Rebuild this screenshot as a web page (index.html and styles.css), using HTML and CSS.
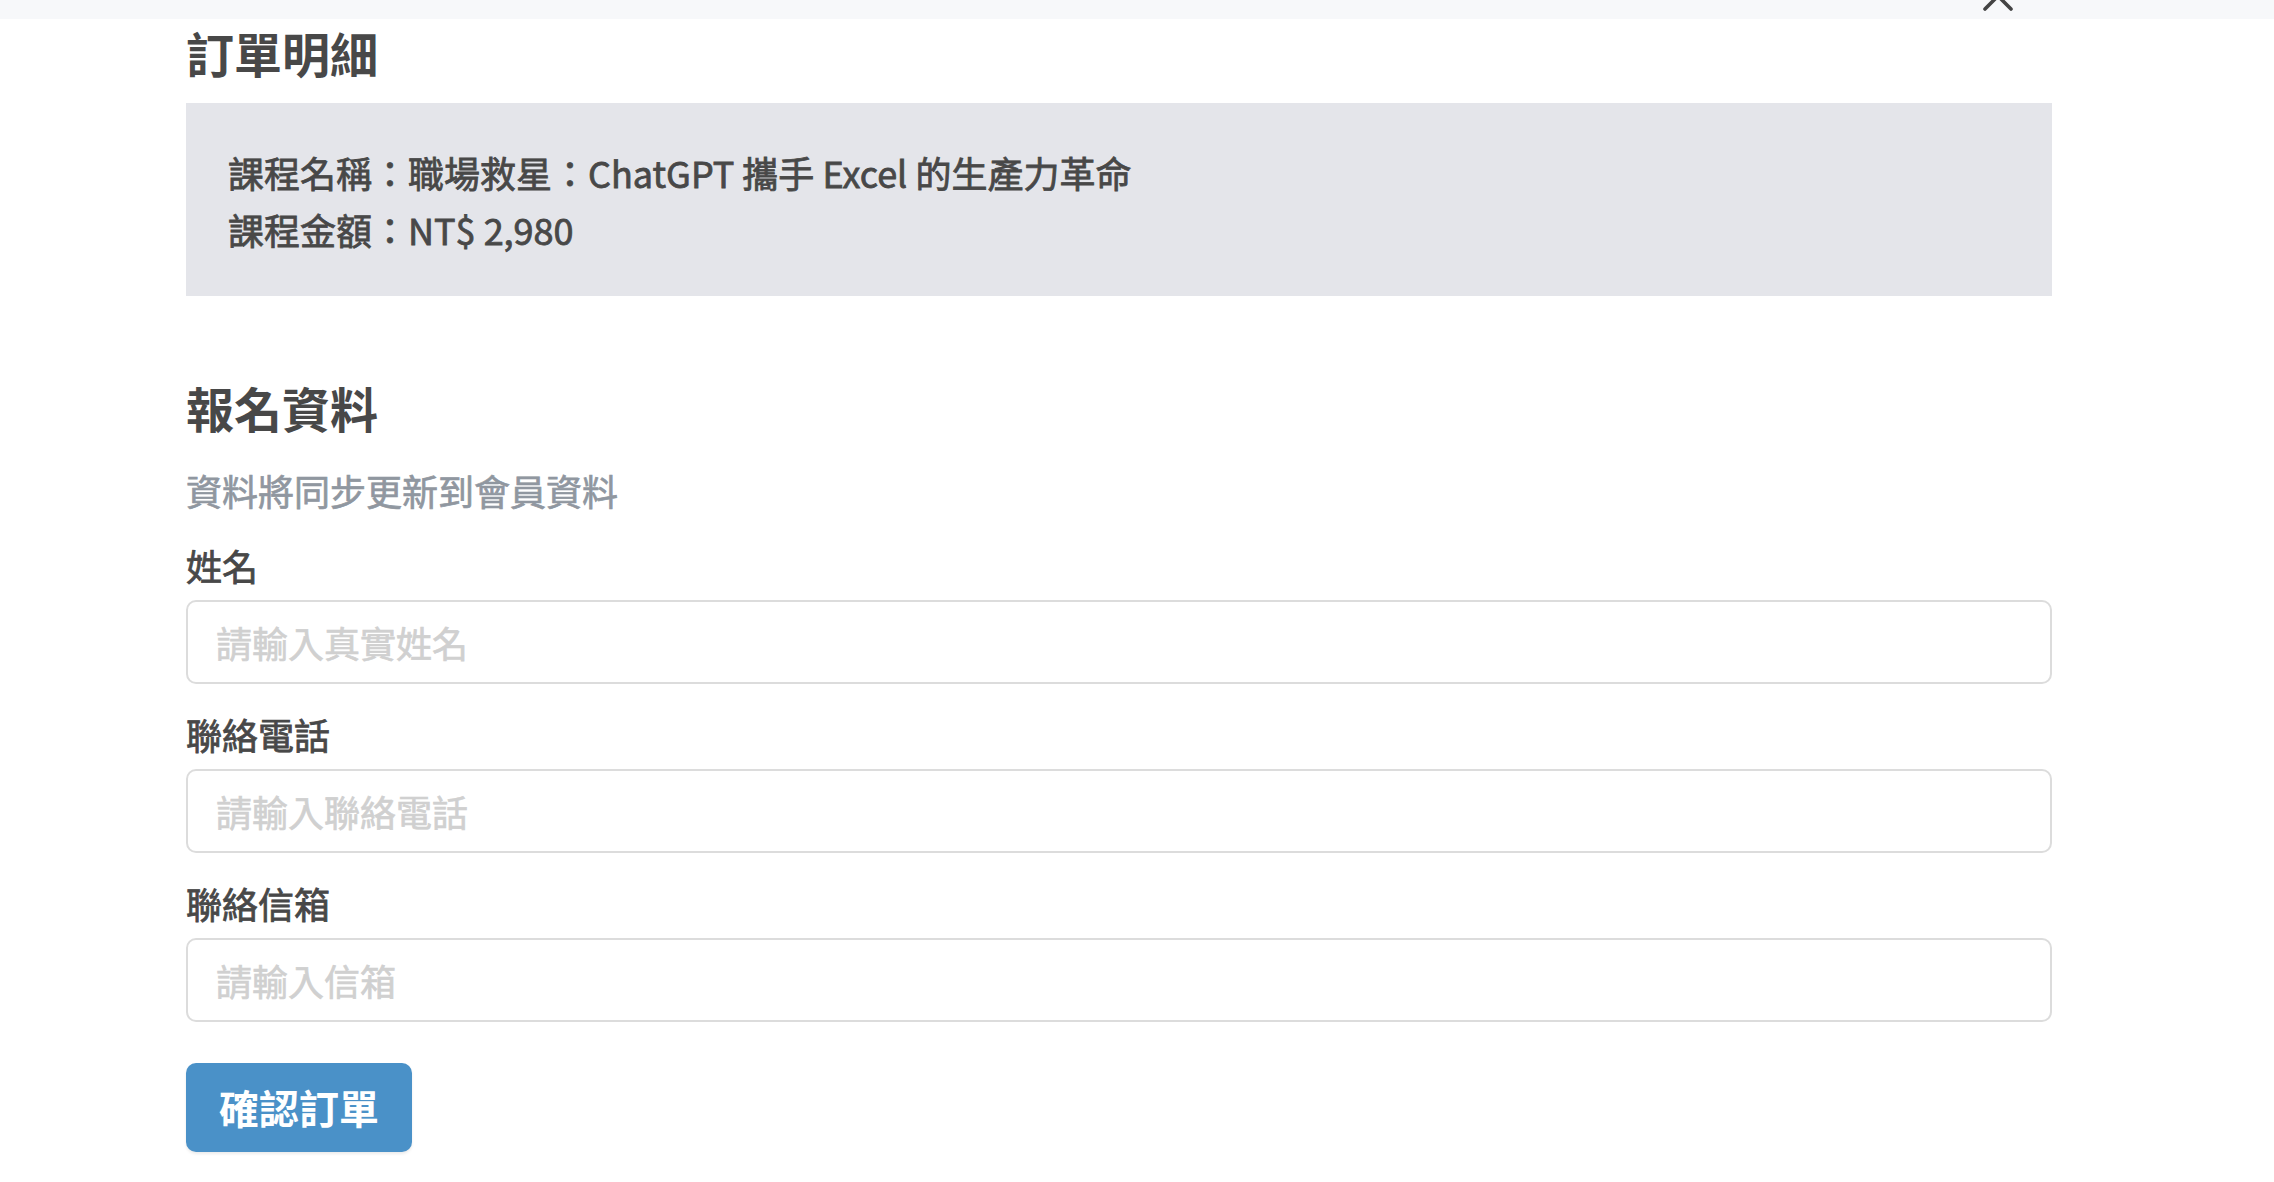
FILE: index.html
```html
<!DOCTYPE html>
<html lang="zh-Hant">
<head>
<meta charset="utf-8">
<title>訂單明細</title>
<link rel="stylesheet" href="styles.css">
</head>
<body>
<header class="topbar">
  <button class="close" aria-label="關閉">
    <svg width="32" height="32" viewBox="0 0 32 32"><path d="M3 3 L29 29 M29 3 L3 29" stroke="#444" stroke-width="3.6" stroke-linecap="round" fill="none"/></svg>
  </button>
</header>
<main class="content">
  <h2 class="title">訂單明細</h2>
  <section class="order">
    <p class="order-line">課程名稱：職場救星：ChatGPT 攜手 Excel 的生產力革命</p>
    <p class="order-line">課程金額：NT$ 2,980</p>
  </section>

  <h2 class="title title-signup">報名資料</h2>
  <p class="hint">資料將同步更新到會員資料</p>

  <form class="form">
    <div class="field">
      <label class="label" for="name">姓名</label>
      <input class="input" id="name" type="text" placeholder="請輸入真實姓名">
    </div>
    <div class="field">
      <label class="label" for="phone">聯絡電話</label>
      <input class="input" id="phone" type="text" placeholder="請輸入聯絡電話">
    </div>
    <div class="field">
      <label class="label" for="email">聯絡信箱</label>
      <input class="input" id="email" type="text" placeholder="請輸入信箱">
    </div>
    <div class="actions">
      <button class="submit" type="button">確認訂單</button>
    </div>
  </form>
</main>
</body>
</html>
```

FILE: styles.css
```css
* {
  box-sizing: border-box;
}

html, body {
  margin: 0;
  padding: 0;
  background: #ffffff;
}

body {
  font-family: "Noto Sans CJK TC", "Noto Sans CJK SC", "Noto Sans", sans-serif;
  color: #484848;
  overflow: hidden;
  height: 1182px;
}

.topbar {
  height: 19px;
  background: #f7f8fa;
  display: flex;
  justify-content: flex-end;
  align-items: flex-start;
  padding-right: 260px;
  overflow: visible;
}

.close {
  margin-top: -20px;
  padding: 0;
  border: 0;
  background: transparent;
  width: 32px;
  height: 32px;
  display: block;
}

.close svg {
  display: block;
}

.content {
  width: 1866px;
  margin-left: 186px;
  display: flex;
  flex-direction: column;
}

.title {
  margin: 0;
  font-size: 48px;
  line-height: 66px;
  font-weight: 700;
  color: #484848;
}

.order {
  margin-top: 18px;
  background: #e4e5ea;
  padding: 41px 42px 38px;
}

.order-line {
  margin: 0;
  font-size: 36px;
  line-height: 57px;
  font-weight: 400;
  -webkit-text-stroke: 0.8px #484848;
  color: #484848;
}

.title-signup {
  margin-top: 78px;
}

.hint {
  margin: 22px 0 0;
  font-size: 36px;
  line-height: 57.6px;
  font-weight: 400;
  -webkit-text-stroke: 0.7px #9097a0;
  color: #9097a0;
}

.form {
  margin-top: 17px;
  display: flex;
  flex-direction: column;
  gap: 21.5px;
}

.field {
  display: flex;
  flex-direction: column;
  gap: 6px;
}

.label {
  font-size: 36px;
  line-height: 57.6px;
  font-weight: 400;
  -webkit-text-stroke: 0.8px #484848;
  color: #484848;
}

.input {
  height: 84px;
  width: 100%;
  border: 2px solid #dcdcdc;
  border-radius: 10px;
  padding: 0 28px;
  font-family: inherit;
  font-size: 36px;
  font-weight: 400;
  -webkit-text-stroke: 0.7px #d0d0d0;
  color: #484848;
  background: #ffffff;
  outline: none;
}

.input::placeholder {
  color: #d0d0d0;
  opacity: 1;
}

.actions {
  margin-top: 19.5px;
  display: flex;
}

.submit {
  font-family: inherit;
  font-size: 40px;
  font-weight: 700;
  line-height: 65px;
  padding: 12px 33px;
  color: #ffffff;
  background: #4a91c8;
  border: 0;
  border-radius: 10px;
  box-shadow: 0 2px 3px rgba(0, 0, 0, 0.08);
}
```
